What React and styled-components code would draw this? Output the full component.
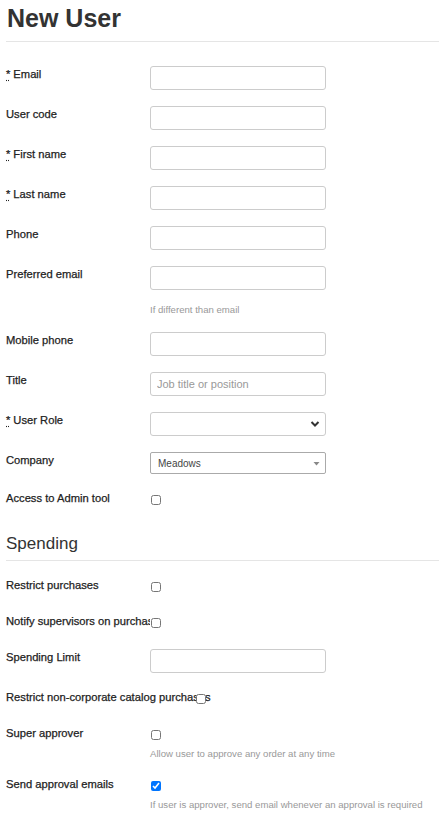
import React from 'react'
import styled, { createGlobalStyle } from 'styled-components'

const GlobalStyle = createGlobalStyle`
  html, body {
    margin: 0;
    padding: 0;
    background: #fff;
  }
  body {
    font-family: "Liberation Sans", Arial, sans-serif;
    color: #333;
  }
`

const Page = styled.div`
  padding: 3px 0 20px 6px;
`

const Title = styled.h1`
  margin: 0 0 24px;
  padding: 0 0 8px 1px;
  font-size: 25px;
  line-height: 30px;
  font-weight: 700;
  color: #333;
  border-bottom: 1px solid #e5e5e5;
`

const SectionTitle = styled.h2`
  margin: 23px 0 16px;
  padding: 0 0 6px;
  font-size: 17px;
  line-height: 21px;
  font-weight: 400;
  color: #333;
  border-bottom: 1px solid #e5e5e5;
`

const Row = styled.div`
  display: grid;
  grid-template-columns: 144px 1fr;
  margin-bottom: 16px;
`

const Label = styled.label`
  display: block;
  font-size: 11.2px;
  line-height: 16px;
  font-weight: 400;
  color: #222;
  -webkit-text-stroke: 0.25px #222;
  white-space: nowrap;
  max-width: ${({ $clip }) => ($clip ? `${$clip}px` : 'none')};
  overflow: ${({ $clip }) => ($clip ? 'hidden' : 'visible')};
`

const Required = styled.abbr`
  text-decoration: underline dotted;
  text-underline-offset: 2px;
  cursor: help;
  margin-right: 3px;
`

const Control = styled.div`
  position: relative;
  z-index: 1;
  margin-left: ${({ $shift }) => $shift || 0}px;
`

const TextInput = styled.input`
  box-sizing: border-box;
  display: block;
  width: 176px;
  height: 24px;
  padding: 0 6px;
  border: 1px solid #ccc;
  border-radius: 3px;
  font-family: "Liberation Sans", Arial, sans-serif;
  font-size: 11px;
  color: #333;
  background: #fff;
  &::placeholder {
    color: #999;
  }
`

const SelectBox = styled.div`
  box-sizing: border-box;
  display: flex;
  align-items: center;
  justify-content: space-between;
  width: 176px;
  height: ${({ $flat }) => ($flat ? 22 : 24)}px;
  padding: 0 5px 0 7px;
  border: 1px solid ${({ $flat }) => ($flat ? '#aaa' : '#ccc')};
  border-radius: ${({ $flat }) => ($flat ? 2 : 3)}px;
  background: #fff;
  font-size: 10px;
  color: #444;
`

const CheckWrap = styled.div`
  min-height: 20px;
  padding-top: 5px;
  box-sizing: border-box;
`

const Check = styled.input.attrs({ type: 'checkbox' })`
  display: block;
  width: 10px;
  height: 10px;
  margin: 0 0 0 1px;
  accent-color: #0075ff;
`

const Hint = styled.div`
  margin-top: ${({ $gap }) => $gap || 10}px;
  font-size: 9.6px;
  line-height: 12px;
  color: #999;
  white-space: nowrap;
`

const Chevron = () => (
  <svg width="10" height="8" viewBox="0 0 10 8">
    <polyline points="1.5,2 5,5.5 8.5,2" fill="none" stroke="#333" strokeWidth="2" />
  </svg>
)

const Caret = () => (
  <svg width="7" height="5" viewBox="0 0 7 5">
    <polygon points="0.5,1 6.5,1 3.5,4.5" fill="#888" />
  </svg>
)

function Field({ label, required, children, hint, clip, shift, hintGap }) {
  return (
    <Row>
      <Label $clip={clip}>
        {required && <Required title="required">*</Required>}
        {label}
      </Label>
      <Control $shift={shift}>
        {children}
        {hint && <Hint $gap={hintGap}>{hint}</Hint>}
      </Control>
    </Row>
  )
}

export default function App() {
  return (
    <>
      <GlobalStyle />
      <Page>
        <Title>New User</Title>

        <Field label="Email" required><TextInput /></Field>
        <Field label="User code"><TextInput /></Field>
        <Field label="First name" required><TextInput /></Field>
        <Field label="Last name" required><TextInput /></Field>
        <Field label="Phone"><TextInput /></Field>
        <Field label="Preferred email" hint="If different than email" hintGap={14}><TextInput /></Field>
        <Field label="Mobile phone"><TextInput /></Field>
        <Field label="Title"><TextInput placeholder="Job title or position" /></Field>
        <Field label="User Role" required>
          <SelectBox>
            <span />
            <Chevron />
          </SelectBox>
        </Field>
        <Field label="Company">
          <SelectBox $flat>
            <span>Meadows</span>
            <Caret />
          </SelectBox>
        </Field>
        <Field label="Access to Admin tool">
          <CheckWrap><Check /></CheckWrap>
        </Field>

        <SectionTitle>Spending</SectionTitle>

        <Field label="Restrict purchases">
          <CheckWrap><Check /></CheckWrap>
        </Field>
        <Field label="Notify supervisors on purchases" clip={154}>
          <CheckWrap><Check /></CheckWrap>
        </Field>
        <Field label="Spending Limit"><TextInput /></Field>
        <Field label="Restrict non-corporate catalog purchases" shift={45}>
          <CheckWrap><Check /></CheckWrap>
        </Field>
        <Field label="Super approver" hint="Allow user to approve any order at any time" hintGap={3}>
          <CheckWrap><Check /></CheckWrap>
        </Field>
        <Field label="Send approval emails" hint="If user is approver, send email whenever an approval is required" hintGap={3}>
          <CheckWrap><Check defaultChecked /></CheckWrap>
        </Field>
      </Page>
    </>
  )
}
